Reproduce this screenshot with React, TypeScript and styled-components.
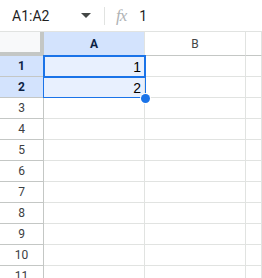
import React from 'react';
import styled, { createGlobalStyle } from 'styled-components';

const GlobalStyle = createGlobalStyle`
  html, body {
    margin: 0;
    padding: 0;
    background: #fff;
    overflow: hidden;
  }
  * {
    box-sizing: border-box;
  }
`;

const Page = styled.div`
  width: 262px;
  height: 278px;
  overflow: hidden;
  font-family: Roboto, 'Liberation Sans', Arial, sans-serif;
`;

const FormulaBar = styled.div`
  display: flex;
  align-items: center;
  height: 32px;
  border-bottom: 1px solid #e1e3e1;
  background: #fff;
`;

const NameBox = styled.div`
  display: flex;
  align-items: center;
  justify-content: space-between;
  width: 104px;
  padding: 0 13px 0 12px;
  font-size: 14px;
  color: #1f1f1f;
`;

const Caret = styled.span`
  width: 0;
  height: 0;
  border-left: 5px solid transparent;
  border-right: 5px solid transparent;
  border-top: 5px solid #444746;
`;

const Divider = styled.span`
  width: 1px;
  height: 18px;
  background: #e1e3e1;
`;

const FxLabel = styled.span`
  margin-left: 11px;
  font-family: 'Liberation Serif', 'Times New Roman', serif;
  font-style: italic;
  font-size: 17px;
  color: #b0b3b5;
  letter-spacing: -1px;
`;

const FormulaValue = styled.span`
  margin-left: 13px;
  font-size: 14px;
  color: #1f1f1f;
`;

const Grid = styled.div`
  position: relative;
  display: grid;
  grid-template-columns: 44px 101px 101px 1fr;
  grid-template-rows: 24px;
  grid-auto-rows: 21px;
`;

const Corner = styled.div`
  background: #f8f9fa;
  border-right: 4px solid #c4c7c5;
  border-bottom: 4px solid #c4c7c5;
`;

const ColHeader = styled.div<{ $selected?: boolean }>`
  display: flex;
  align-items: center;
  justify-content: center;
  font-size: 12px;
  font-weight: ${(p) => (p.$selected ? 700 : 400)};
  color: ${(p) => (p.$selected ? '#0b1f44' : '#444746')};
  background: ${(p) => (p.$selected ? '#d3e3fd' : '#fff')};
  border-right: 1px solid #e1e3e1;
  border-bottom: 1px solid #c4c7c5;
`;

const RowHeader = styled.div<{ $selected?: boolean }>`
  display: flex;
  align-items: center;
  justify-content: center;
  font-size: 12px;
  font-weight: ${(p) => (p.$selected ? 700 : 400)};
  color: ${(p) => (p.$selected ? '#0b1f44' : '#3c4043')};
  background: ${(p) => (p.$selected ? '#d3e3fd' : '#fff')};
  border-right: 1px solid #c4c7c5;
  border-bottom: 1px solid #c4c7c5;
`;

const Cell = styled.div<{ $selected?: boolean }>`
  display: flex;
  align-items: flex-end;
  justify-content: flex-end;
  padding: 0 3px 1px;
  font-family: Arial, 'Liberation Sans', sans-serif;
  font-size: 14px;
  color: #000;
  background: ${(p) => (p.$selected ? '#e8f0fe' : '#fff')};
  border-right: 1px solid #e1e3e1;
  border-bottom: 1px solid #e1e3e1;
`;

const RangeBox = styled.div`
  position: absolute;
  left: 43px;
  top: 23px;
  width: 103px;
  height: 43px;
  border: 1px solid #1a73e8;
  pointer-events: none;
`;

const ActiveBox = styled.div`
  position: absolute;
  left: 43px;
  top: 23px;
  width: 103px;
  height: 23px;
  border: 2px solid #1a73e8;
  pointer-events: none;
`;

const FillHandle = styled.div`
  position: absolute;
  left: 141px;
  top: 62px;
  width: 9px;
  height: 9px;
  border-radius: 50%;
  background: #1a73e8;
  box-shadow: 0 0 0 1px #fff;
`;

const columns = ['A', 'B', 'C'];
const rows = Array.from({ length: 11 }, (_, i) => i + 1);
const values: Record<number, string> = { 1: '1', 2: '2' };

export default function App() {
  return (
    <Page>
      <GlobalStyle />
      <FormulaBar>
        <NameBox>
          A1:A2
          <Caret />
        </NameBox>
        <Divider />
        <FxLabel>fx</FxLabel>
        <FormulaValue>1</FormulaValue>
      </FormulaBar>
      <Grid>
        <Corner />
        {columns.map((c) => (
          <ColHeader key={c} $selected={c === 'A'}>
            {c === 'C' ? '' : c}
          </ColHeader>
        ))}
        {rows.map((r) => (
          <React.Fragment key={r}>
            <RowHeader $selected={r <= 2}>{r}</RowHeader>
            <Cell $selected={r <= 2}>{values[r]}</Cell>
            <Cell />
            <Cell />
          </React.Fragment>
        ))}
        <RangeBox />
        <ActiveBox />
        <FillHandle />
      </Grid>
    </Page>
  );
}
